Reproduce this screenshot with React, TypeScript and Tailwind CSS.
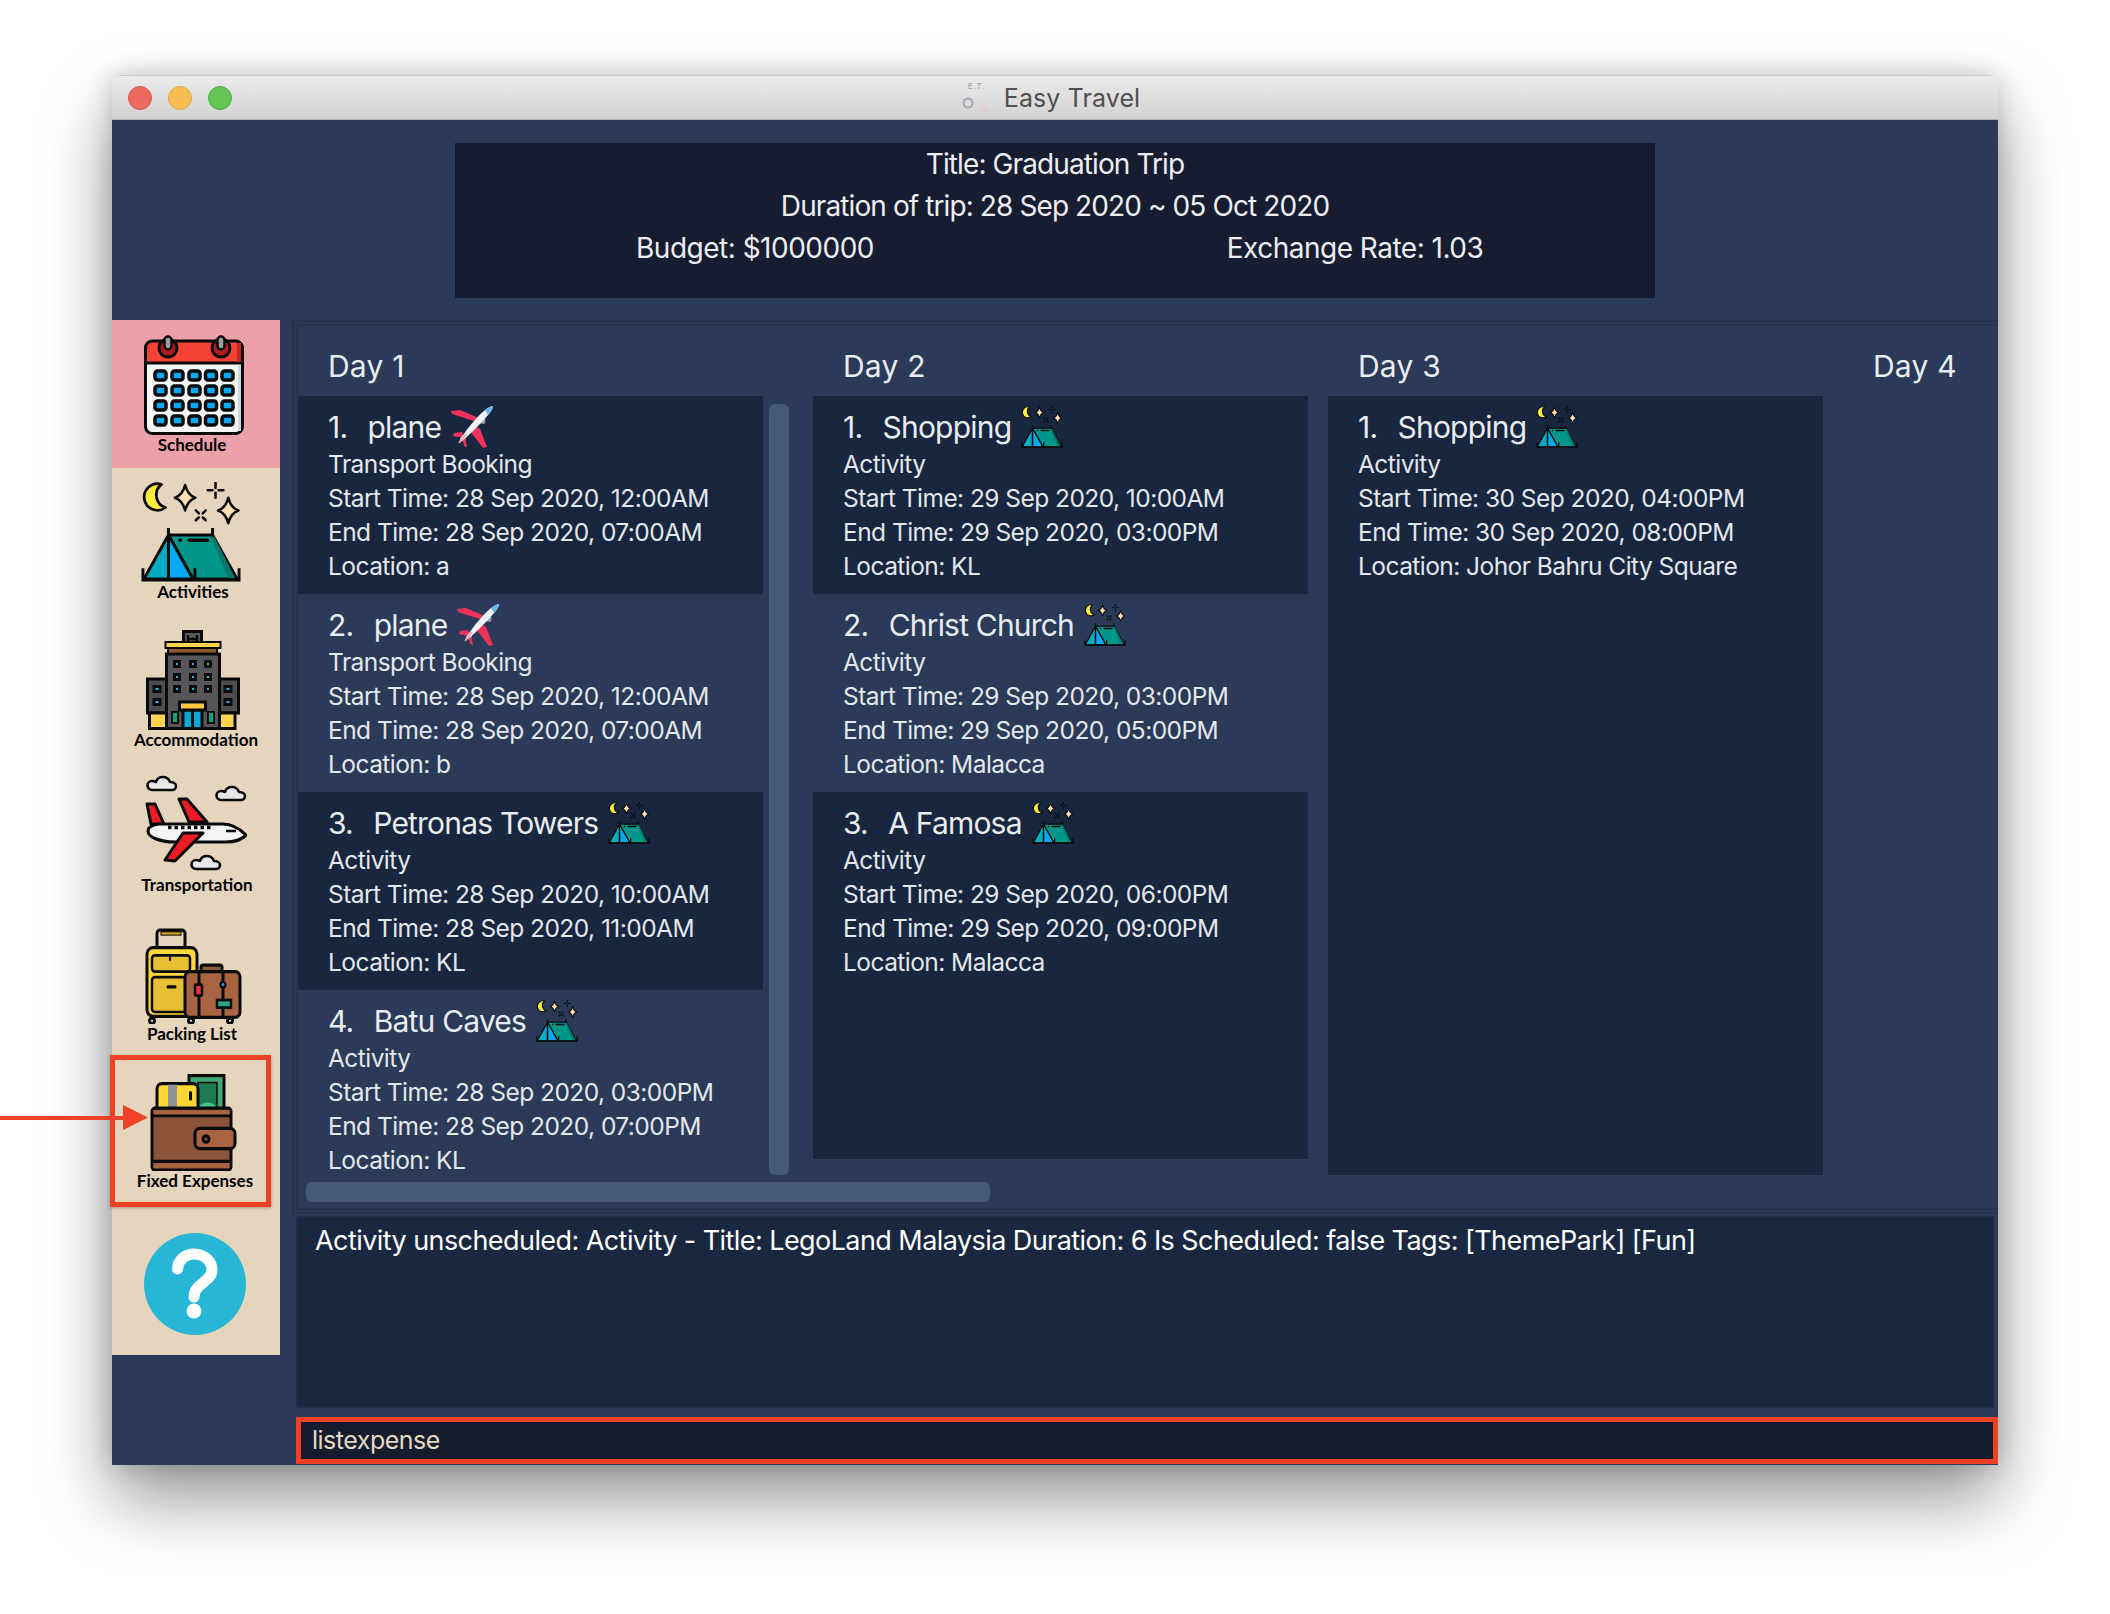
import React from 'react';

const K = '#0a0a0a';

const CalendarIcon = () => {
  const xs = [16.5, 33.5, 50.5, 67, 83.5];
  const ys = [40.5, 55.5, 70.5, 85.5];
  return (
    <svg viewBox="0 0 100 100" className="w-[100px] h-[100px]">
      <rect x="1.5" y="6.5" width="97" height="92" rx="7" fill="#f5f6f6" stroke={K} strokeWidth="3" />
      <path d="M1.5 28V13a7 7 0 0 1 7-7h83a7 7 0 0 1 7 7v15z" fill="#f44336" stroke={K} strokeWidth="3" />
      <rect x="93" y="8" width="4" height="19" fill="#c62828" />
      <rect x="94" y="30" width="3" height="66" fill="#cfd8dc" />
      <circle cx="24" cy="13" r="9" fill="#b71c1c" stroke={K} strokeWidth="3" />
      <circle cx="77" cy="13" r="9" fill="#b71c1c" stroke={K} strokeWidth="3" />
      <rect x="20.5" y="1.5" width="7" height="13" rx="3.5" fill="#9e9e9e" stroke={K} strokeWidth="2.5" />
      <rect x="73.5" y="1.5" width="7" height="13" rx="3.5" fill="#9e9e9e" stroke={K} strokeWidth="2.5" />
      {ys.map((y) =>
        xs.map((x) => (
          <rect key={`${x}-${y}`} x={x - 5.5} y={y - 4.5} width="11" height="9" rx="2.5" fill="#03a9f4" stroke={K} strokeWidth="3.5" />
        )),
      )}
    </svg>
  );
};

const Star = ({ x, y, s }: { x: number; y: number; s: number }) => (
  <path
    d={`M${x} ${y - s}Q${x + s * 0.2} ${y - s * 0.2} ${x + s * 0.8} ${y}Q${x + s * 0.2} ${y + s * 0.2} ${x} ${y + s}Q${x - s * 0.2} ${y + s * 0.2} ${x - s * 0.8} ${y}Q${x - s * 0.2} ${y - s * 0.2} ${x} ${y - s}z`}
    fill="#ffe0b2"
    stroke={K}
    strokeWidth="2.6"
    strokeLinejoin="round"
  />
);

const TentIcon = ({ className }: { className: string }) => (
  <svg viewBox="0 0 102 102" className={className}>
    <path d="M21 2.500A13.500 13.500 0 1 0 25 26A13.400 13.400 0 0 1 21 2.500z" fill="#ffeb3b" stroke={K} strokeWidth="2.8" strokeLinejoin="round" />
    <Star x={45} y={16} s={13} />
    <Star x={89} y={29} s={13} />
    <path d="M76 1v5M76 11v5M68 8.500h5M79 8.500h5" stroke={K} strokeWidth="2.6" strokeLinecap="round" />
    <path d="M56 29l3 3M66 29l-3 3M56 39l3-3M66 39l-3-3" stroke={K} strokeWidth="2.6" strokeLinecap="round" />
    <path d="M28 54H73L98 99H53z" fill="#009688" stroke={K} strokeWidth="3" strokeLinejoin="round" />
    <path d="M75 56L96 98H89L71 56z" fill="#00796b" />
    <path d="M28 54L3 99H28z" fill="#00acc1" stroke={K} strokeWidth="3" strokeLinejoin="round" />
    <path d="M28 54L53 99H28z" fill="#03a9f4" stroke={K} strokeWidth="3" strokeLinejoin="round" />
    <path d="M28 47V99M73 47V54M2 88V100H100V88M55 88V99" fill="none" stroke={K} strokeWidth="3" />
    <circle cx="40" cy="59.500" r="2" fill={K} />
    <path d="M49 59.500H68" stroke={K} strokeWidth="3.500" strokeLinecap="round" />
  </svg>
);

const HotelIcon = () => (
  <svg viewBox="0 0 94 100" className="w-[94px] h-[100px]">
    <g stroke={K} strokeWidth="3">
      <rect x="37.500" y="1.500" width="18" height="15" fill="#5a5a5f" />
      <rect x="19.500" y="12" width="55" height="6" fill="#ffd54f" strokeWidth="2" />
      <rect x="22" y="18" width="49" height="6" fill="#8d5a3a" strokeWidth="2" />
      <rect x="1.500" y="49" width="19" height="34" fill="#4c4c50" />
      <rect x="73.500" y="49" width="19" height="34" fill="#4c4c50" />
      <rect x="3.500" y="83" width="17" height="15.500" fill="#ffd54f" />
      <rect x="73.500" y="83" width="15.500" height="15.500" fill="#ffd54f" />
      <rect x="20.500" y="24" width="53" height="74.500" fill="#55555a" />
      <rect x="37" y="80" width="19" height="18.500" fill="#03a9d4" />
      <rect x="33.500" y="72" width="26" height="8" fill="#ffc83d" />
      <path d="M46.500 80V98" />
      <rect x="26" y="82" width="6" height="11" fill="#00a97f" strokeWidth="2" />
      <rect x="62" y="82" width="6" height="11" fill="#00a97f" strokeWidth="2" />
    </g>
    <path d="M42 5V13M51 5V13M42 9H51" stroke={K} strokeWidth="2.400" fill="none" />
    {[31, 47, 62].map((x) =>
      [34, 47, 59].map((y) => (
        <rect key={`${x}-${y}`} x={x - 2.500} y={y - 2.500} width="5" height="5" fill="#18b3e6" stroke={K} strokeWidth="3" />
      )),
    )}
    {[11, 82].map((x) =>
      [59, 72].map((y) => (
        <rect key={`${x}-${y}`} x={x - 3} y={y - 2.500} width="6" height="5" fill="#18b3e6" stroke={K} strokeWidth="3" />
      )),
    )}
  </svg>
);

const Cloud = ({ x, y }: { x: number; y: number }) => (
  <path
    transform={`translate(${x} ${y})`}
    d="M5 14a4.500 4.500 0 0 1 0-9c2 0 3 .5 4 1c1-3.500 4-5 7-5c4 0 6 2.500 7 5c3 0 6 1.500 6 4s-2 4-4 4z"
    fill="#e8e8e8"
    stroke={K}
    strokeWidth="2.600"
    strokeLinejoin="round"
  />
);

const PlaneIcon = () => (
  <svg viewBox="0 0 102 100" className="w-[102px] h-[100px]">
    <Cloud x={2} y={1} />
    <Cloud x={71} y={11} />
    <Cloud x={46} y={80} />
    <path d="M2 29H10L19 49H6z" fill="#ed1c24" stroke={K} strokeWidth="3" strokeLinejoin="round" />
    <path d="M34 24H42L62 47H44z" fill="#ed1c24" stroke={K} strokeWidth="3" strokeLinejoin="round" />
    <path d="M3 56C3 52 6 50 14 49H78C88 49 96 55 101 60C98 64 90 67 80 67H30C14 67 3 62 3 56z" fill="#f4f4f4" stroke={K} strokeWidth="3" strokeLinejoin="round" />
    <path d="M38 58H58L30 86L20 85z" fill="#ed1c24" stroke={K} strokeWidth="3" strokeLinejoin="round" />
    <path d="M23 52.500H67" stroke={K} strokeWidth="3.500" strokeDasharray="3.500 3" />
    <path d="M81 56H91" stroke={K} strokeWidth="2.500" />
  </svg>
);

const LuggageIcon = () => (
  <svg viewBox="0 12 100 88" preserveAspectRatio="none" className="w-[100px] h-[96px]">
    <g stroke={K} strokeWidth="3">
      <path d="M12 30V17a3 3 0 0 1 3-3H37a3 3 0 0 1 3 3V30" fill="none" />
      <rect x="16" y="15.500" width="20" height="3" fill="#d4a92a" strokeWidth="1" />
      <rect x="2" y="30" width="50" height="63" rx="6" fill="#ffd83b" />
      <rect x="7" y="37" width="38" height="15" rx="3" fill="#e6bf32" strokeWidth="2.500" />
      <rect x="7" y="57" width="36" height="32" rx="3" fill="#e6bf32" strokeWidth="2.500" />
      <circle cx="7" cy="97" r="2.500" fill="#fff" />
      <circle cx="46" cy="97" r="2.500" fill="#fff" />
      <circle cx="85" cy="97" r="2.500" fill="#fff" />
      <rect x="56" y="46" width="21" height="6" rx="2" fill="#8d5a3a" />
      <rect x="40" y="52" width="55" height="42" rx="5" fill="#a86440" />
      <path d="M54 52V94M78 52V94" />
      <rect x="50" y="64" width="7" height="10" rx="1" fill="#ed3237" strokeWidth="2.500" />
      <circle cx="78" cy="64" r="2.500" fill="#2b8fe0" strokeWidth="2" />
      <rect x="72" y="78" width="14" height="7" fill="#26a887" strokeWidth="2.500" />
    </g>
    <path d="M23 66H30" stroke={K} strokeWidth="3" strokeLinecap="round" />
    <path d="M25 38V42" stroke={K} strokeWidth="2" />
  </svg>
);

const WalletIcon = () => (
  <svg viewBox="0 9 100 91" preserveAspectRatio="none" className="w-[100px] h-[97px]">
    <g stroke={K} strokeWidth="3">
      <rect x="45" y="10.500" width="35" height="34" fill="#3fa874" />
      <rect x="54" y="17" width="19" height="27" fill="#1f7a54" strokeWidth="1.500" />
      <path d="M54 42a9 6 0 0 1 19 0" fill="#3ec48c" strokeWidth="0" />
      <path d="M13 42V23a5 5 0 0 1 5-5H49a5 5 0 0 1 5 5V42z" fill="#fdd835" />
      <rect x="24" y="19" width="9" height="22" fill="#8f9296" strokeWidth="0" />
      <rect x="45" y="25" width="3" height="9" rx="1.500" fill={K} strokeWidth="0" />
      <rect x="8" y="41" width="79" height="58" rx="3" fill="#8b5338" />
      <path d="M8 48H87M8 91H87" />
      <rect x="9.500" y="43" width="76" height="4" fill="#a86440" strokeWidth="0" />
      <rect x="9.500" y="92.500" width="76" height="5" fill="#a86440" strokeWidth="0" />
      <rect x="51" y="60" width="40" height="19" rx="5" fill="#a86440" />
      <circle cx="62" cy="70" r="3" fill="#8b5338" />
    </g>
  </svg>
);

const HelpIcon = () => (
  <svg viewBox="0 0 102 102" className="w-[102px] h-[102px]">
    <circle cx="51" cy="51" r="51" fill="#27b6d6" />
    <path d="M33.500 36C34 27 41 21 50 21C60 21 68 28 68 37C68 49 50 50 50 64" fill="none" stroke="#fff" strokeWidth="11" strokeLinecap="round" />
    <circle cx="50" cy="78" r="7.500" fill="#fff" />
  </svg>
);

const PlaneEmoji = () => (
  <svg viewBox="0 0 42 42" className="w-[42px] h-[42px] shrink-0">
    <ellipse cx="32" cy="15" rx="2.500" ry="3" fill="#8f9aa5" />
    <ellipse cx="12" cy="33" rx="3" ry="2.500" fill="#8f9aa5" />
    <path d="M23 15L1 8L0 5L9 4L30 13z" fill="#f0315c" />
    <path d="M22 18L29 23L36 41L32 42L19 25z" fill="#f0315c" />
    <path d="M11 26L3 27L2 30L13 32z" fill="#f0315c" />
    <path d="M11 27L14 31L16 41L13 40z" fill="#f0315c" />
    <path d="M8 37C8 33 24 12 34 4C36 2.500 40 0 42 0C42 3 39 7 37 9C30 18 12 35 8 37z" fill="#eef3f7" />
    <path d="M34 4C36 2.500 40 0 42 0C42 3 39 7 37 9z" fill="#67b7e6" />
    <path d="M8 37L15 28" stroke="#f0a0b0" strokeWidth="1.500" />
  </svg>
);

const navItems = [
  { label: 'Schedule', box: 'h-[148px] pt-[15px] bg-[#eca0a9]', pos: 'pl-[32px]', labelPos: 'w-[160px]', icon: <CalendarIcon /> },
  { label: 'Activities', box: 'h-[148px] pt-[14px]', pos: 'pl-[28px]', labelPos: 'w-[162px]', icon: <TentIcon className="w-[102px] h-[100px]" /> },
  { label: 'Accommodation', box: 'h-[148px] pt-[14px]', pos: 'pl-[34px]', labelPos: 'w-[168px]', icon: <HotelIcon /> },
  { label: 'Transportation', box: 'h-[148px] pt-[11px]', pos: 'pl-[33px]', labelPos: 'w-[170px]', icon: <PlaneIcon /> },
  { label: 'Packing List', box: 'h-[148px] pt-[16px]', pos: 'pl-[33px]', labelPos: 'w-[160px]', icon: <LuggageIcon /> },
  { label: 'Fixed Expenses', box: 'h-[148px] pt-[14px]', pos: 'pl-[32px]', labelPos: 'w-[166px]', icon: <WalletIcon /> },
];

type Item = { no: number; name: string; kind: 'plane' | 'tent'; lines: string[] };

const days: { title: string; listH: string; scroll: boolean; items: Item[] }[] = [
  {
    title: 'Day 1',
    listH: 'h-[779px]',
    scroll: true,
    items: [
      { no: 1, name: 'plane', kind: 'plane', lines: ['Transport Booking', 'Start Time: 28 Sep 2020, 12:00AM', 'End Time: 28 Sep 2020, 07:00AM', 'Location: a'] },
      { no: 2, name: 'plane', kind: 'plane', lines: ['Transport Booking', 'Start Time: 28 Sep 2020, 12:00AM', 'End Time: 28 Sep 2020, 07:00AM', 'Location: b'] },
      { no: 3, name: 'Petronas Towers', kind: 'tent', lines: ['Activity', 'Start Time: 28 Sep 2020, 10:00AM', 'End Time: 28 Sep 2020, 11:00AM', 'Location: KL'] },
      { no: 4, name: 'Batu Caves', kind: 'tent', lines: ['Activity', 'Start Time: 28 Sep 2020, 03:00PM', 'End Time: 28 Sep 2020, 07:00PM', 'Location: KL'] },
    ],
  },
  {
    title: 'Day 2',
    listH: 'h-[763px]',
    scroll: false,
    items: [
      { no: 1, name: 'Shopping', kind: 'tent', lines: ['Activity', 'Start Time: 29 Sep 2020, 10:00AM', 'End Time: 29 Sep 2020, 03:00PM', 'Location: KL'] },
      { no: 2, name: 'Christ Church', kind: 'tent', lines: ['Activity', 'Start Time: 29 Sep 2020, 03:00PM', 'End Time: 29 Sep 2020, 05:00PM', 'Location: Malacca'] },
      { no: 3, name: 'A Famosa', kind: 'tent', lines: ['Activity', 'Start Time: 29 Sep 2020, 06:00PM', 'End Time: 29 Sep 2020, 09:00PM', 'Location: Malacca'] },
    ],
  },
  {
    title: 'Day 3',
    listH: 'h-[779px]',
    scroll: false,
    items: [
      { no: 1, name: 'Shopping', kind: 'tent', lines: ['Activity', 'Start Time: 30 Sep 2020, 04:00PM', 'End Time: 30 Sep 2020, 08:00PM', 'Location: Johor Bahru City Square'] },
    ],
  },
];

const ItemCard = ({ item }: { item: Item }) => (
  <div className={`h-[198px] shrink-0 pl-[30px] pt-[11px] ${item.no % 2 === 0 ? 'bg-[#2a3a58]' : 'bg-[#18263f]'}`}>
    <div className="h-[40px] flex items-center text-[30px] tracking-[-0.8px] text-[#e9ecf1] whitespace-pre">
      <span>{item.no}.{'  '}</span>
      <span className="ml-[5px]">{item.name}</span>
      <span className="ml-[10px]">
        {item.kind === 'plane' ? <PlaneEmoji /> : <TentIcon className="w-[42px] h-[42px]" />}
      </span>
    </div>
    {item.lines.map((line) => (
      <div key={line} className="h-[34px] leading-[34px] text-[24.5px] tracking-[-0.55px] text-[#e4e7ec] whitespace-nowrap">
        {line}
      </div>
    ))}
  </div>
);

export default function App() {
  return (
    <div className="relative w-[2110px] h-[1614px] overflow-hidden bg-white pl-[112px] pt-[75px] font-['Inter',sans-serif]">
      <div className="w-[1886px] h-[1390px] flex flex-col rounded-t-[9px] overflow-hidden shadow-[0_34px_70px_rgba(0,0,0,0.42),0_0_24px_rgba(0,0,0,0.18)]">
        {/* title bar */}
        <div className="relative h-[45px] shrink-0 flex items-center justify-center pt-[3px] bg-gradient-to-b from-[#ebebeb] to-[#d2d2d2] border-t border-t-[#c9c9c9] border-b border-b-[#b5b5b5]">
          <div className="absolute left-[16px] top-[10px] flex gap-[16px]">
            <div className="w-[24px] h-[24px] rounded-full bg-[#ee6a5f] border border-[#d9574d]" />
            <div className="w-[24px] h-[24px] rounded-full bg-[#f6be50] border border-[#dea63a]" />
            <div className="w-[24px] h-[24px] rounded-full bg-[#62c554] border border-[#4fae42]" />
          </div>
          <div className="flex items-center gap-[11px] pr-[7px]">
            <div className="relative w-[30px] h-[34px] text-[8px] leading-none text-[#9aa0ab]">
              <span className="absolute left-[5px] top-0 tracking-[1px]">E.T.</span>
              <svg viewBox="0 0 30 24" className="absolute left-0 top-[10px] w-[30px] h-[24px]">
                <circle cx="5" cy="11" r="4.500" fill="none" stroke="#a4aab3" strokeWidth="2" />
                <path d="M18 16L26 20" stroke="#e8c4c4" strokeWidth="1.500" />
              </svg>
            </div>
            <span className="text-[25px] text-[#4f4f4f] tracking-[0.1px]">Easy Travel</span>
          </div>
        </div>

        <div className="flex-1 flex flex-col bg-[#2a3a58] min-h-0">
          {/* trip header */}
          <div className="h-[200px] shrink-0 pt-[23px] flex justify-center">
            <div className="w-[1200px] h-[155px] bg-[#171d30] text-[#eceef2] text-[28px] tracking-[-0.9px] text-center">
              <div className="h-[42px] leading-[42px]">Title: Graduation Trip</div>
              <div className="h-[42px] leading-[42px]">Duration of trip: 28 Sep 2020 ~ 05 Oct 2020</div>
              <div className="h-[42px] leading-[42px] grid grid-cols-2 tracking-[-0.5px]">
                <div>Budget: $1000000</div>
                <div>Exchange Rate: 1.03</div>
              </div>
            </div>
          </div>

          <div className="flex-1 flex min-h-0">
            {/* sidebar */}
            <div className="w-[168px] h-[1035px] shrink-0 bg-[#e5d5bd] flex flex-col">
              {navItems.map((nav) => (
                <div key={nav.label} className={nav.box}>
                  <div className={nav.pos}>{nav.icon}</div>
                  <div className={`${nav.labelPos} h-[20px] leading-[20px] text-center text-[17px] font-bold text-black font-['Lato',sans-serif] whitespace-nowrap`}>
                    {nav.label}
                  </div>
                </div>
              ))}
              <div className="pl-[32px] pt-[25px]">
                <HelpIcon />
              </div>
            </div>

            <div className="ml-[12px] w-[1706px] flex flex-col min-w-0">
              {/* schedule panel, double frame */}
              <div className="h-[894px] shrink-0 border-2 border-r-0 border-[#24334f] pl-[2px] pt-[2px] pb-[2px]">
                <div className="h-full border-2 border-r-0 border-[#24334f] overflow-hidden">
                  <div className="flex gap-[20px] h-[849px]">
                    {days.map((day) => (
                      <div key={day.title} className="w-[495px] shrink-0">
                        <div className="h-[70px] pl-[30px] pt-[11px] flex items-center text-[30px] tracking-[0.2px] text-[#e9ecf1]">{day.title}</div>
                        <div className="flex">
                          <div className={`${day.scroll ? 'w-[465px]' : 'w-[495px]'} ${day.listH} bg-[#18263f] overflow-hidden flex flex-col`}>
                            {day.items.map((item) => (
                              <ItemCard key={item.no} item={item} />
                            ))}
                          </div>
                          {day.scroll && <div className="ml-[6px] mt-[8px] w-[20px] h-[771px] rounded-[6px] bg-[#46597a]" />}
                        </div>
                      </div>
                    ))}
                    <div className="w-[495px] shrink-0">
                      <div className="h-[70px] pl-[30px] pt-[11px] flex items-center text-[30px] tracking-[0.2px] text-[#e9ecf1]">Day 4</div>
                    </div>
                  </div>
                  <div className="ml-[8px] mt-[7px] w-[684px] h-[20px] rounded-[6px] bg-[#46597a]" />
                </div>
              </div>

              {/* result box */}
              <div className="ml-[4px] mt-[2px] h-[192px] shrink-0 w-[1698px] bg-[#192741] border border-[#1f2e4a] pl-[18px] pt-[3px] text-[27px] leading-[42px] tracking-[-0.57px] text-white whitespace-nowrap">
                Activity unscheduled: Activity - Title: LegoLand Malaysia Duration: 6 Is Scheduled: false Tags: [ThemePark] [Fun]
              </div>

              {/* command box */}
              <div className="ml-[4px] mt-[9px] h-[47px] shrink-0 border-[5px] border-[#ee4126] bg-[#141c2e] pl-[11px] flex items-center text-[25px] tracking-[-0.5px] text-[#e5d8c2]">
                listexpense
              </div>
            </div>
          </div>
        </div>
      </div>

      {/* annotation over the sidebar */}
      <div className="absolute left-[110px] top-[1055px] w-[161px] h-[152px] border-[5px] border-[#ee4126] shadow-[0_1px_3px_rgba(0,0,0,0.3)]" />
      <div className="absolute left-0 top-[1116px] w-[125px] h-[4px] bg-[#ee4126]" />
      <svg viewBox="0 0 25 25" className="absolute left-[123px] top-[1105px] w-[25px] h-[25px]">
        <path d="M0 0L25 12.500L0 25z" fill="#ee4126" />
      </svg>
    </div>
  );
}
